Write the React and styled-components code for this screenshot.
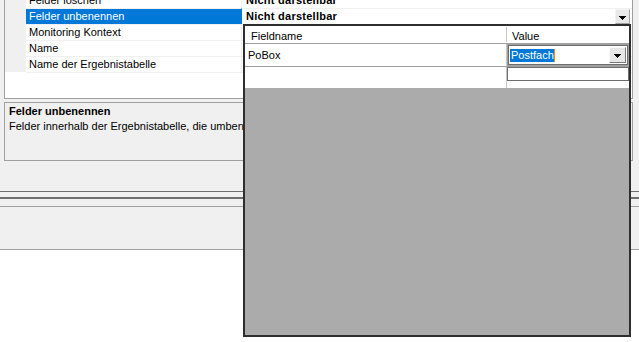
import React from "react";
import styled, { createGlobalStyle } from "styled-components";

const GlobalStyle = createGlobalStyle`
  html, body { margin: 0; padding: 0; background: #fff; }
  body {
    font-family: "Liberation Sans", Arial, sans-serif;
    font-size: 11px;
    color: #000;
  }
  * { box-sizing: border-box; }
`;

const Screen = styled.div`
  position: relative;
  width: 639px;
  height: 342px;
  overflow: hidden;
  background: #fff;
`;

const Form = styled.div`
  background: #f0f0f0;
  display: flex;
  flex-direction: column;
`;

const Content = styled.div`
  display: flex;
  flex-direction: column;
  gap: 3px;
  padding: 0 6px 30px 4px;
`;

const PropertyGrid = styled.div`
  height: 99px;
  border: 1px solid #a0a0a0;
  border-top: none;
  background: #fff;
  overflow: hidden;
`;

const PropList = styled.div`
  margin-top: -8px;
  display: flex;
  flex-direction: column;
`;

const PropRow = styled.div`
  display: grid;
  grid-template-columns: 21px 216px 1fr;
  height: 16px;
`;

const MarginCell = styled.div`
  background: #f0f0f0;
`;

const NameCell = styled.div`
  border-top: 1px solid #f0f0f0;
  border-right: 1px solid ${(p) => (p.$selected ? "#0078d7" : "#f0f0f0")};
  background: ${(p) => (p.$selected ? "#0078d7" : "#fff")};
  color: ${(p) => (p.$selected ? "#fff" : "#000")};
  padding-left: 3px;
  line-height: 15px;
  white-space: nowrap;
  overflow: hidden;
`;

const ValueCell = styled.div`
  border-top: 1px solid #f0f0f0;
  display: flex;
  align-items: center;
  justify-content: space-between;
  padding: 0 2px 0 4px;
  line-height: 15px;
  font-weight: bold;
  letter-spacing: 0.25px;
  white-space: nowrap;
`;

const ListEnd = styled.div`
  margin-left: 21px;
  border-top: 1px solid #f0f0f0;
`;

const SmallDropButton = styled.div`
  width: 15px;
  height: 15px;
  background: #e8e8e8;
  border-top: 1px solid #f4f4f4;
  border-left: 1px solid #f4f4f4;
  border-right: 1px solid #a0a0a0;
  border-bottom: 1px solid #a0a0a0;
  display: flex;
  align-items: center;
  justify-content: center;
  padding-top: 2px;
`;

const HelpBox = styled.div`
  height: 59px;
  border: 1px solid #a0a0a0;
  padding: 1px 4px;
  overflow: hidden;
`;

const HelpTitle = styled.div`
  font-weight: bold;
  line-height: 15px;
`;

const HelpText = styled.div`
  line-height: 15px;
  white-space: nowrap;
`;

const Splitter = styled.div`
  height: 8px;
  border-top: 1px solid #6d6d6d;
  border-bottom: 2px solid #6d6d6d;
`;

const ToolStrip = styled.div`
  height: 8px;
  border-bottom: 1px solid #a0a0a0;
`;

const StatusPanel = styled.div`
  height: 43px;
  border-bottom: 1px solid #a0a0a0;
`;

/* Dropdown popup with the data grid */
const Popup = styled.div`
  position: absolute;
  left: 243px;
  top: 24px;
  width: 388px;
  height: 313px;
  border: 2px solid #2e2e2e;
  background: #ababab;
  display: flex;
  flex-direction: column;
`;

const GridRow = styled.div`
  display: grid;
  grid-template-columns: 261px 1px 122px;
  height: ${(p) => p.$height}px;
  background: #fff;
  border-bottom: ${(p) => (p.$line ? "1px solid #a0a0a0" : "none")};
`;

const HeaderCell = styled.div`
  padding: 4px 0 0 ${(p) => p.$indent}px;
  line-height: 13px;
  color: #000;
`;

const HeaderDivider = styled.div`
  background: #c8c8c8;
  margin: 1px 0 1px;
`;

const ColDivider = styled.div`
  background: #c4c4c4;
`;

const TextCell = styled.div`
  padding: 4px 0 0 3px;
  line-height: 15px;
`;

const EditCell = styled.div`
  display: flex;
  flex-direction: column;
`;

const ComboBox = styled.div`
  height: 22px;
  border: 1px solid #a0a0a0;
  box-shadow: inset 0 0 0 1px #6d6d6d;
  background: #fff;
  display: flex;
  align-items: center;
  justify-content: space-between;
  padding: 1px 2px 1px 2px;
`;

const Selected = styled.span`
  background: #0078d7;
  color: #fff;
  line-height: 13px;
  padding: 0 0 0 1px;
  border-right: 1px solid #ff8c1a;
  margin-top: 1px;
`;

const ComboButton = styled.div`
  width: 17px;
  height: 16px;
  background: #e6e6e6;
  border-top: 1px solid #fafafa;
  border-left: 1px solid #fafafa;
  border-right: 1px solid #7a7a7a;
  border-bottom: 1px solid #7a7a7a;
  display: flex;
  align-items: center;
  justify-content: center;
  padding-top: 2px;
`;

const TextBox = styled.div`
  height: 14px;
  border: 1px solid #6d6d6d;
  background: #fff;
`;

const Arrow = () => (
  <svg width="7" height="4" viewBox="0 0 7 4" shapeRendering="crispEdges">
    <polygon points="0,0 7,0 3.5,4" fill="#000" />
  </svg>
);

const rows = [
  { name: "Felder löschen", value: "Nicht darstellbar" },
  { name: "Felder unbenennen", value: "Nicht darstellbar", selected: true },
  { name: "Monitoring Kontext", value: "" },
  { name: "Name", value: "" },
  { name: "Name der Ergebnistabelle", value: "" },
];

export default function App() {
  return (
    <Screen>
      <GlobalStyle />
      <Form>
        <Content>
          <PropertyGrid>
            <PropList>
              {rows.map((r) => (
                <PropRow key={r.name}>
                  <MarginCell />
                  <NameCell $selected={r.selected}>{r.name}</NameCell>
                  <ValueCell>
                    <span>{r.value}</span>
                    {r.selected && (
                      <SmallDropButton>
                        <Arrow />
                      </SmallDropButton>
                    )}
                  </ValueCell>
                </PropRow>
              ))}
              <ListEnd />
            </PropList>
          </PropertyGrid>
          <HelpBox>
            <HelpTitle>Felder unbenennen</HelpTitle>
            <HelpText>
              Felder innerhalb der Ergebnistabelle, die umbenannt werden sollen.
            </HelpText>
          </HelpBox>
        </Content>
        <Splitter />
        <ToolStrip />
        <StatusPanel />
      </Form>

      <Popup>
        <GridRow $height={18} $line>
          <HeaderCell $indent={6}>Fieldname</HeaderCell>
          <HeaderDivider />
          <HeaderCell $indent={5}>Value</HeaderCell>
        </GridRow>
        <GridRow $height={23} $line>
          <TextCell>PoBox</TextCell>
          <ColDivider />
          <EditCell>
            <ComboBox>
              <Selected>Postfach</Selected>
              <ComboButton>
                <Arrow />
              </ComboButton>
            </ComboBox>
          </EditCell>
        </GridRow>
        <GridRow $height={21}>
          <TextCell />
          <ColDivider />
          <EditCell>
            <TextBox />
          </EditCell>
        </GridRow>
      </Popup>
    </Screen>
  );
}
